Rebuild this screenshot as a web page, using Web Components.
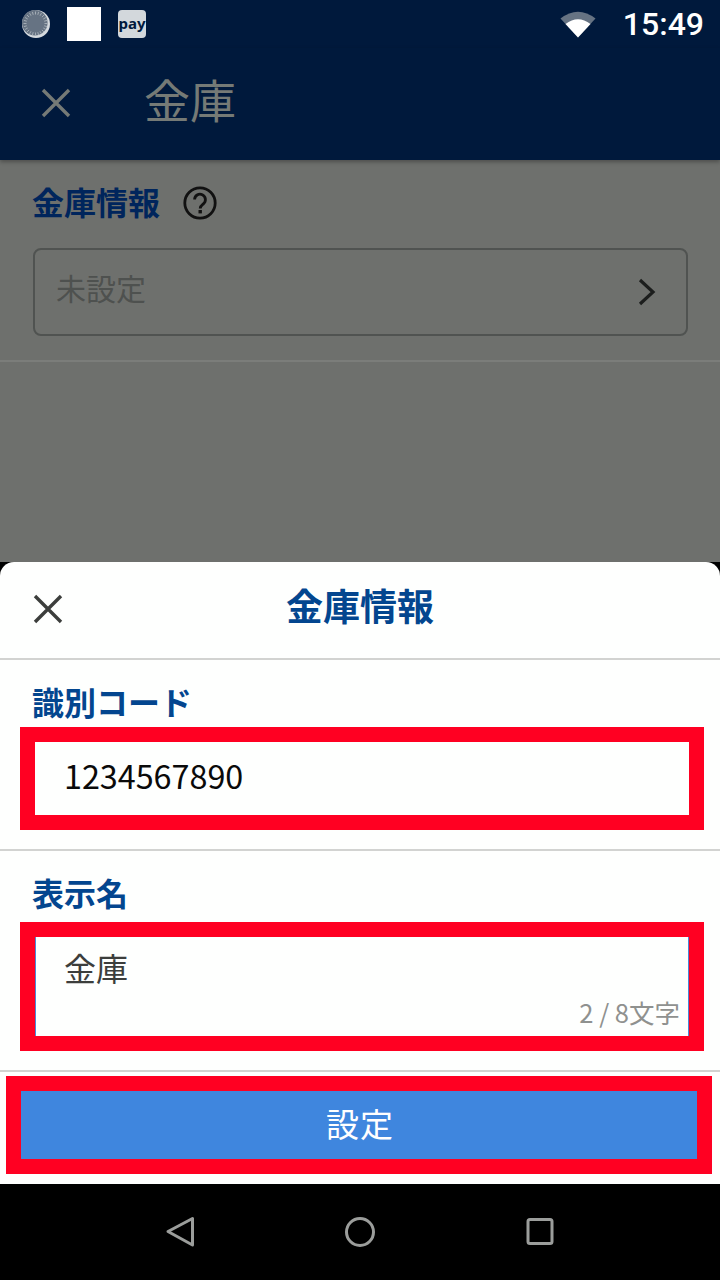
<!DOCTYPE html>
<html lang="ja">
<head>
<meta charset="utf-8">
<title>金庫</title>
<style>
  html, body { margin: 0; padding: 0; background: #000; }
  body {
    width: 720px;
    height: 1280px;
    overflow: hidden;
    display: flex;
    flex-direction: column;
    font-family: "Noto Sans CJK JP", "Noto Sans", sans-serif;
  }
  safe-settings { flex: 1; }
</style>
</head>
<body>
  <status-bar></status-bar>
  <app-bar title="金庫"></app-bar>
  <safe-settings></safe-settings>
  <safe-sheet>
    <sheet-field label="識別コード" value="1234567890"></sheet-field>
    <sheet-field label="表示名" value="金庫" count="2 / 8文字" multiline></sheet-field>
  </safe-sheet>
  <nav-bar></nav-bar>

<script>
class StatusBar extends HTMLElement {
  constructor() {
    super();
    this.attachShadow({ mode: 'open' });
  }

  connectedCallback() {
    // tick marks round the clock-like notification icon
    const ticks = Array.from({ length: 24 }, (_, i) => {
      const a = (i * 15) * Math.PI / 180;
      const x1 = 13.5 + Math.cos(a) * 9, y1 = 13.5 + Math.sin(a) * 9;
      const x2 = 13.5 + Math.cos(a) * 12, y2 = 13.5 + Math.sin(a) * 12;
      return `<line x1="${x1.toFixed(1)}" y1="${y1.toFixed(1)}" x2="${x2.toFixed(1)}" y2="${y2.toFixed(1)}"/>`;
    }).join('');

    this.shadowRoot.innerHTML = `
      <style>
        :host {
          display: flex;
          align-items: center;
          height: 48px;
          background: #00193c;
          padding: 0 16px 0 22px;
          box-sizing: border-box;
        }
        .sync { width: 28px; height: 28px; display: block; }
        .square { width: 34px; height: 34px; background: #fff; margin-left: 17px; }
        .pay {
          width: 28px;
          height: 28px;
          margin-left: 17px;
          background: #d3d8dc;
          border-radius: 4px;
          color: #00193c;
          font: 700 15px/26px "Noto Sans", sans-serif;
          text-align: center;
        }
        .right { margin-left: auto; display: flex; align-items: center; gap: 27px; }
        .wifi { width: 36px; height: 28px; display: block; }
        .time { color: #fff; font: 500 32px/48px Roboto, sans-serif; }
      </style>
      <svg class="sync" viewBox="0 0 28 28">
        <circle cx="14" cy="14" r="14" fill="#d5dade"/>
        <circle cx="12.8" cy="12.8" r="12.8" fill="#667383"/>
        <g stroke="#a4adb5" stroke-width="1">${ticks}</g>
      </svg>
      <div class="square"></div>
      <div class="pay">pay</div>
      <div class="right">
        <svg class="wifi" viewBox="0 0 36 28">
          <path d="M0.5 8.5 Q18 -5 35.5 8.5 L18 27.5Z" fill="#667383"/>
          <path d="M5.5 14 Q18 4.5 30.5 14 L18 27.5Z" fill="#fff"/>
        </svg>
        <span class="time">15:49</span>
      </div>
    `;
  }
}

class AppBar extends HTMLElement {
  constructor() {
    super();
    this.attachShadow({ mode: 'open' });
  }

  connectedCallback() {
    this.shadowRoot.innerHTML = `
      <style>
        :host {
          display: flex;
          align-items: center;
          height: 112px;
          padding: 0 0 2px 40px;
          box-sizing: border-box;
          background: #00193c;
          box-shadow: 0 2px 4px rgba(0, 0, 0, 0.3);
          position: relative;
          color: #757a76;
        }
        svg { width: 32px; height: 32px; display: block; }
        h1 { margin: 0 0 10px 72px; font-size: 46px; font-weight: 400; line-height: 60px; }
      </style>
      <svg viewBox="0 0 32 32"><path d="M3 3L29 29M29 3L3 29" stroke="currentColor" stroke-width="3.4" fill="none"/></svg>
      <h1>${this.getAttribute('title')}</h1>
    `;
  }
}

class SafeSettings extends HTMLElement {
  constructor() {
    super();
    this.attachShadow({ mode: 'open' });
  }

  connectedCallback() {
    this.shadowRoot.innerHTML = `
      <style>
        :host { display: block; background: #6e706d; }
        .section {
          padding: 19px 32px 24px 33px;
          border-bottom: 2px solid #7b7d7a;
          height: 157px;
        }
        .head { display: flex; align-items: center; height: 48px; }
        h2 { margin: 0 0 4px -1px; font-size: 32px; line-height: 48px; font-weight: 700; color: #00255c; }
        .help { width: 34px; height: 34px; margin-left: 23px; display: block; }
        .select {
          margin-top: 21px;
          height: 88px;
          box-sizing: border-box;
          border: 2px solid #505351;
          border-radius: 8px;
          padding: 0 29px 0 22px;
          display: flex;
          align-items: center;
          justify-content: space-between;
          color: #4e514f;
          font-size: 30px;
        }
        .select span { margin: 0 0 10px -1px; }
        .select svg { width: 20px; height: 30px; display: block; }
      </style>
      <div class="section">
        <div class="head">
          <h2>金庫情報</h2>
          <svg class="help" viewBox="0 0 34 34">
            <circle cx="17" cy="17" r="15.2" fill="none" stroke="#111" stroke-width="2.8"/>
            <path d="M11.6 13.6a5.4 5.4 0 1 1 8.8 4.2c-2 1.6-3.2 2.4-3.2 4.6" fill="none" stroke="#111" stroke-width="2.8"/>
            <rect x="15.5" y="24" width="3.4" height="3.4" fill="#111"/>
          </svg>
        </div>
        <div class="select">
          <span>未設定</span>
          <svg viewBox="0 0 20 30"><path d="M3 3L16 15L3 27" fill="none" stroke="#1c1e1d" stroke-width="3.2"/></svg>
        </div>
      </div>
    `;
  }
}

class SafeSheet extends HTMLElement {
  constructor() {
    super();
    this.attachShadow({ mode: 'open' });
  }

  connectedCallback() {
    this.shadowRoot.innerHTML = `
      <style>
        :host {
          display: block;
          background: #fefffe;
          border-radius: 14px 14px 0 0;
        }
        .head {
          height: 96px;
          display: flex;
          align-items: center;
          justify-content: center;
          position: relative;
          border-bottom: 2px solid #d2d3d1;
        }
        /* close button sits over the centred title */
        .close { position: absolute; left: 33px; top: 32px; width: 30px; height: 30px; }
        h2 { margin: 0 0 10px; font-size: 37px; line-height: 50px; font-weight: 700; color: #03468f; }
        .actions { padding: 4px 8px 10px 6px; }
        .submit {
          height: 98px;
          box-sizing: border-box;
          border: 15px solid #ff0022;
          background: #3f86de;
          color: #fff;
          font-size: 33px;
          letter-spacing: 1px;
          display: flex;
          align-items: center;
          justify-content: center;
        }
        .submit span { margin: 0 0 4px 2px; }
      </style>
      <div class="head">
        <svg class="close" viewBox="0 0 30 30"><path d="M2 2L28 28M28 2L2 28" stroke="#3c3e3c" stroke-width="3.4" fill="none"/></svg>
        <h2>金庫情報</h2>
      </div>
      <slot></slot>
      <div class="actions"><div class="submit"><span>設定</span></div></div>
    `;
  }
}

class SheetField extends HTMLElement {
  constructor() {
    super();
    this.attachShadow({ mode: 'open' });
  }

  connectedCallback() {
    const multiline = this.hasAttribute('multiline');
    const count = this.getAttribute('count');
    this.shadowRoot.innerHTML = `
      <style>
        :host {
          display: block;
          border-bottom: 2px solid #d2d3d1;
          padding: ${multiline ? 17 : 17}px 16px 19px 20px;
        }
        label {
          display: block;
          margin-left: 12px;
          font-size: 32px;
          line-height: 48px;
          font-weight: 700;
          color: #03468f;
        }
        .frame { border: 15px solid #ff0022; margin-top: ${multiline ? 6 : 2}px; }
        .input {
          height: ${multiline ? 99 : 73}px;
          box-sizing: border-box;
          background: #fefffe;
          padding: ${multiline ? '6px 8px 0 28px' : '9px 8px 0 29px'};
          position: relative;
          ${multiline ? 'border-left: 1px solid #4a8ad8; border-right: 1px solid #4a8ad8;' : ''}
          font-size: ${multiline ? 32 : 32.3}px;
          line-height: 48px;
          color: ${multiline ? '#3c3e3c' : '#0a0a0a'};
        }
        /* counter rests in the corner of the input */
        .count {
          position: absolute;
          right: 8px;
          bottom: 5px;
          font-size: 25.5px;
          line-height: 38px;
          color: #8f918f;
        }
      </style>
      <label>${this.getAttribute('label')}</label>
      <div class="frame">
        <div class="input">
          ${this.getAttribute('value')}
          ${count ? `<span class="count">${count}</span>` : ''}
        </div>
      </div>
    `;
  }
}

class NavBar extends HTMLElement {
  constructor() {
    super();
    this.attachShadow({ mode: 'open' });
  }

  connectedCallback() {
    this.shadowRoot.innerHTML = `
      <style>
        :host {
          display: flex;
          align-items: center;
          justify-content: center;
          gap: 150px;
          height: 96px;
          background: #000;
        }
        svg { width: 30px; height: 32px; display: block; }
      </style>
      <svg viewBox="0 0 30 32"><path d="M27.5 2.5V29L3 15.5Z" fill="none" stroke="#9b9d9b" stroke-width="3" stroke-linejoin="round"/></svg>
      <svg viewBox="0 0 30 32"><circle cx="15" cy="16" r="13.5" fill="none" stroke="#9b9d9b" stroke-width="3"/></svg>
      <svg viewBox="0 0 30 32"><rect x="3" y="3.5" width="24" height="24" rx="2" fill="none" stroke="#9b9d9b" stroke-width="3"/></svg>
    `;
  }
}

customElements.define('status-bar', StatusBar);
customElements.define('app-bar', AppBar);
customElements.define('safe-settings', SafeSettings);
customElements.define('safe-sheet', SafeSheet);
customElements.define('sheet-field', SheetField);
customElements.define('nav-bar', NavBar);
</script>
</body>
</html>
